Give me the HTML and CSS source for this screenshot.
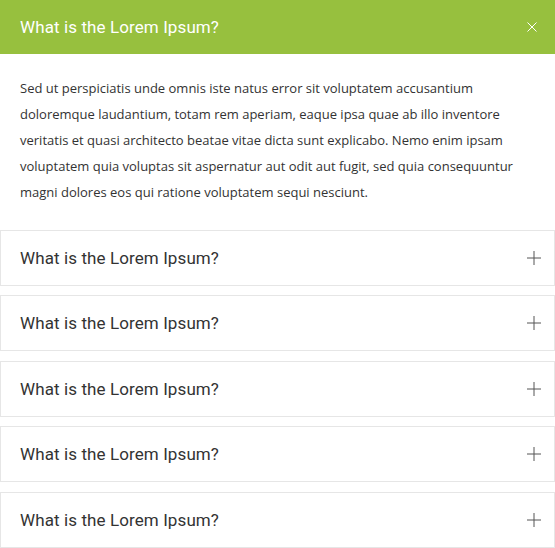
FILE: index.html
```html
<!DOCTYPE html>
<html>
<head>
<meta charset="utf-8">
<link rel="stylesheet" href="styles.css">
</head>
<body>
<div class="accordion">
  <div class="item open">
    <div class="head active">
      <span class="title">What is the Lorem Ipsum?</span>
      <svg class="icon" width="10" height="10" viewBox="0 0 10 10"><path d="M0.5 0.5L9.5 9.5M9.5 0.5L0.5 9.5" stroke="#fff" stroke-width="1" fill="none"/></svg>
    </div>
    <div class="body">
      <p>Sed ut perspiciatis unde omnis iste natus error sit voluptatem accusantium doloremque laudantium, totam rem aperiam, eaque ipsa quae ab illo inventore veritatis et quasi architecto beatae vitae dicta sunt explicabo. Nemo enim ipsam voluptatem quia voluptas sit aspernatur aut odit aut fugit, sed quia consequuntur magni dolores eos qui ratione voluptatem sequi nesciunt.</p>
    </div>
  </div>
  <div class="item card"><div class="head"><span class="title">What is the Lorem Ipsum?</span><svg class="icon" width="14" height="14" viewBox="0 0 14 14"><path d="M7 0V14M0 7H14" stroke="#555" stroke-width="1" fill="none"/></svg></div></div>
  <div class="item card"><div class="head"><span class="title">What is the Lorem Ipsum?</span><svg class="icon" width="14" height="14" viewBox="0 0 14 14"><path d="M7 0V14M0 7H14" stroke="#555" stroke-width="1" fill="none"/></svg></div></div>
  <div class="item card"><div class="head"><span class="title">What is the Lorem Ipsum?</span><svg class="icon" width="14" height="14" viewBox="0 0 14 14"><path d="M7 0V14M0 7H14" stroke="#555" stroke-width="1" fill="none"/></svg></div></div>
  <div class="item card"><div class="head"><span class="title">What is the Lorem Ipsum?</span><svg class="icon" width="14" height="14" viewBox="0 0 14 14"><path d="M7 0V14M0 7H14" stroke="#555" stroke-width="1" fill="none"/></svg></div></div>
  <div class="item card"><div class="head"><span class="title">What is the Lorem Ipsum?</span><svg class="icon" width="14" height="14" viewBox="0 0 14 14"><path d="M7 0V14M0 7H14" stroke="#555" stroke-width="1" fill="none"/></svg></div></div>
</div>
</body>
</html>
```
FILE: styles.css
```css
html, body {
  margin: 0;
  padding: 0;
  background: #fff;
}
.accordion {
  width: 555px;
  display: flex;
  flex-direction: column;
  gap: 9.5px;
}
.head {
  display: flex;
  align-items: center;
  justify-content: space-between;
  font-family: Roboto, "Liberation Sans", sans-serif;
  font-size: 17px;
  line-height: 20px;
  letter-spacing: 0.1px;
  color: #333;
}
.head.active {
  background: #97c03e;
  color: #fff;
  padding: 17px 18px 17px 20px;
}
.body {
  padding: 21px 20px 15px 20px;
}
.body p {
  margin: 0;
  font-family: "Open Sans", sans-serif;
  font-size: 13px;
  line-height: 26px;
  color: #333;
}
.card {
  border: 1px solid #e6e6e6;
}
.card .head {
  padding: 17px 13px 17px 19px;
}
```
